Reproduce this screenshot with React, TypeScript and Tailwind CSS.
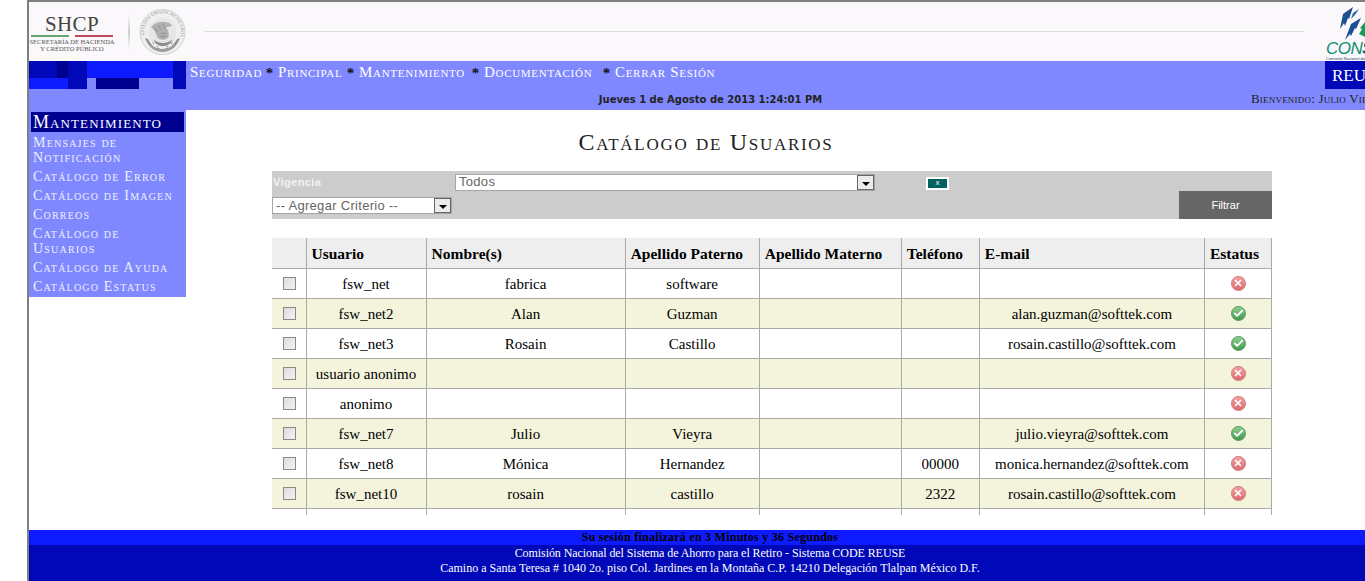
import { Check, X } from 'lucide-react';

const serif = "font-['Liberation_Serif',serif]";
const sans = "font-['Liberation_Sans',sans-serif]";
const deco = "font-['Liberation_Serif',serif] [font-variant:small-caps]";

const navItems = [
  { label: 'Seguridad', width: 'w-[71px]' },
  { label: 'Principal', width: 'w-[64px]' },
  { label: 'Mantenimiento', width: 'w-[108px]' },
  { label: 'Documentación', width: 'w-[114px]' },
  { label: 'Cerrar Sesión', width: 'w-[96px]' },
];

const sideItems = [
  'Mensajes de Notificación',
  'Catálogo de Error',
  'Catálogo de Imagen',
  'Correos',
  'Catálogo de Usuarios',
  'Catálogo de Ayuda',
  'Catálogo Estatus',
];

const columns = ['Usuario', 'Nombre(s)', 'Apellido Paterno', 'Apellido Materno', 'Teléfono', 'E-mail', 'Estatus'];

const users = [
  { user: 'fsw_net', name: 'fabrica', last: 'software', phone: '', email: '', active: false },
  { user: 'fsw_net2', name: 'Alan', last: 'Guzman', phone: '', email: 'alan.guzman@softtek.com', active: true },
  { user: 'fsw_net3', name: 'Rosain', last: 'Castillo', phone: '', email: 'rosain.castillo@softtek.com', active: true },
  { user: 'usuario anonimo', name: '', last: '', phone: '', email: '', active: false },
  { user: 'anonimo', name: '', last: '', phone: '', email: '', active: false },
  { user: 'fsw_net7', name: 'Julio', last: 'Vieyra', phone: '', email: 'julio.vieyra@softtek.com', active: true },
  { user: 'fsw_net8', name: 'Mónica', last: 'Hernandez', phone: '00000', email: 'monica.hernandez@softtek.com', active: false },
  { user: 'fsw_net10', name: 'rosain', last: 'castillo', phone: '2322', email: 'rosain.castillo@softtek.com', active: false },
];

function Seal() {
  return (
    <svg width="47" height="48" viewBox="0 0 47 48">
      <defs>
        <path id="sealArc" d="M6.500 31A18.500 18.500 0 1 1 40.500 31" />
      </defs>
      <circle cx="23.500" cy="24" r="23" fill="#f0eff0" />
      <circle cx="23.500" cy="24" r="22.500" fill="none" stroke="#c9c9c9" strokeWidth="0.8" />
      <text fontSize="4.200" fill="#8a8a8a" fontFamily="Liberation Serif, serif" letterSpacing="0.2">
        <textPath href="#sealArc" startOffset="4">ESTADOS UNIDOS MEXICANOS</textPath>
      </text>
      <path d="M6 30c3 9 10 14 17.500 14S38 39 41 30c-1 0-3 1-4 3-3 5-8 8-13.500 8S12 38 10 33c-1-2-3-3-4-3z" fill="#9c9c9c" />
      <path d="M8 31l4 6M12 30l3 7M35 30l-3 7M39 31l-4 6M18 38l2 3M29 38l-2 3" stroke="#6f6f6f" strokeWidth="1" strokeDasharray="1.500 1" fill="none" />
      <circle cx="23.500" cy="24" r="14" fill="#e6e6e6" />
      <path d="M12 19c5-6 15-7 21-2-2 2-4 2-6 2 2 3 4 7 2 11-4 3-9 2-11-1-1-4-3-8-6-10z" fill="#b0b0b0" />
      <path d="M15 32c3 2 6 3 9 3s6-1 9-3c-1 4-5 6-9 6s-8-2-9-6z" fill="#8c8c8c" />
      <path d="M19 17l3 5M24 16l2 5M16 20l3 4M22 26l5-1M21 29l6-1" stroke="#8f8f8f" strokeWidth="0.9" fill="none" />
    </svg>
  );
}

function ConsarSwoosh() {
  return (
    <svg width="39" height="37" viewBox="0 0 39 37" className="block">
      <path d="M27 3 L17 10 L14 25 L18 19 L19 22 L22 14 L23 15z" fill="#1c4f8f" />
      <path d="M35 14 L25 20 L19 36 L24 30 L25 32 L29 24 L30 25z" fill="#1c4f8f" />
      <path d="M33 5 L27 9 L25 15 L29 11z" fill="#2f6aa8" />
      <path d="M39 18 L34 24 L36 25 L33 30 L39 33z" fill="#1f9a5c" />
    </svg>
  );
}

function StatusIcon({ active }: { active: boolean }) {
  if (active) {
    return (
      <span className="ml-[26px] flex h-[15px] w-[15px] items-center justify-center rounded-full border border-[#5c9c62] bg-gradient-to-b from-[#8ccf90] to-[#3f9a4a]">
        <Check className="h-[11px] w-[11px] text-white" strokeWidth={4} />
      </span>
    );
  }
  return (
    <span className="ml-[26px] flex h-[15px] w-[15px] items-center justify-center rounded-full border border-[#d07a7e] bg-gradient-to-b from-[#f2a0a3] to-[#dd6a70]">
      <X className="h-[10px] w-[10px] text-white" strokeWidth={4} />
    </span>
  );
}

function FakeSelect({ label, width }: { label: string; width: string }) {
  return (
    <div className={`flex h-[17px] items-center justify-between border border-[#a5a5a5] bg-white ${width}`}>
      <span className={`-mt-[1px] pl-[3px] text-[13px] leading-none tracking-[0.3px] text-[#666] ${sans}`}>{label}</span>
      <span className="flex h-[15px] w-[17px] items-center justify-center border border-[#666] bg-[#ececec]">
        <span className="mt-[3px] h-0 w-0 border-x-[4px] border-t-[4px] border-x-transparent border-t-black" />
      </span>
    </div>
  );
}

export default function App() {
  return (
    <div className={`flex h-[581px] w-[1365px] overflow-hidden bg-white ${serif}`}>
      <div className="w-[27px] shrink-0 bg-white" />
      <div className="flex w-[1364px] shrink-0 flex-col border-l-2 border-t-2 border-[#7f7f7f]">
        {/* Header */}
        <header className="flex h-[59px] shrink-0 items-center bg-[#faf8fa]">
          <div className="flex w-[175px] shrink-0 items-center">
            <div className="ml-[2px] flex w-[82px] flex-col items-center">
              <span className="mt-[1px] text-[21px] leading-[22px] tracking-[0.4px] text-[#444]">SHCP</span>
              <div className="flex h-[2px] w-[82px] gap-[6px]">
                <span className="flex-1 bg-[#6aa56f]" />
                <span className="flex-1 bg-[#c0485e]" />
              </div>
              <span className="mt-[1px] whitespace-nowrap text-[6.500px] leading-[7px] text-[#555]">SECRETARÍA DE HACIENDA</span>
              <span className="whitespace-nowrap text-[6.500px] leading-[7px] text-[#555]">Y CRÉDITO PÚBLICO</span>
            </div>
            <div className="ml-[15px] h-[36px] w-[2px] bg-gradient-to-b from-[#faf8fa] via-[#cfcfcf] to-[#faf8fa]" />
            <div className="ml-[9px]">
              <Seal />
            </div>
          </div>
          <div className="h-px w-[1100px] bg-[#dcdcdc]" />
          <div className="ml-[22px] flex w-[60px] shrink-0 flex-col pt-[1px]">
            <ConsarSwoosh />
            <span className={`text-[17px] italic leading-[15px] tracking-[-0.5px] text-[#0e8f73] ${sans}`}>
              CON<span className="font-bold text-[#17456f]">SAR</span>
            </span>
            <span className={`whitespace-nowrap text-[4px] leading-[5px] text-[#27476d] ${sans}`}>Comisión Nacional del Sistema de Ahorro</span>
          </div>
        </header>

        {/* Nav */}
        <div className="flex h-[49px] shrink-0 flex-col bg-[#8088ff]">
          <div className="flex h-[28px]">
            <div className="grid h-[28px] w-[157px] shrink-0 grid-cols-[28px_11px_19px_9px_43px_34px_13px] grid-rows-[17px_11px]">
              <span className="bg-[#0008b8]" />
              <span className="bg-[#000090]" />
              <span className="row-span-2 bg-[#0008b8]" />
              <span className="col-span-3 bg-[#0f1bff]" />
              <span className="row-span-2 bg-[#0008b8]" />
              <span className="col-span-2 bg-[#0f1bff]" />
              <span className="bg-[#8088ff]" />
              <span className="bg-[#000090]" />
              <span className="bg-[#8088ff]" />
            </div>
            <nav className="ml-[4px] flex h-[22px] w-[1135px] items-center text-[15px] tracking-[0.7px] text-white [font-variant:small-caps]">
              {navItems.map((item, i) => (
                <span key={item.label} className="flex items-center whitespace-nowrap">
                  {i > 0 && <span className="mt-[3px] w-[17px] text-center text-[15px] font-bold leading-none tracking-normal text-[#111]">*</span>}
                  <span className={item.width}>{item.label}</span>
                </span>
              ))}
            </nav>
            <div className="flex h-[28px] w-[66px] shrink-0 items-center bg-[#0008b8] pl-[7px] text-[17px] leading-none text-white">
              REUSE
            </div>
          </div>
          <div className="relative h-[21px] text-center text-[10px] font-bold leading-[21px] text-[#222] [font-family:'DejaVu_Sans',sans-serif]">
            <span className="ml-[1px]">Jueves 1 de Agosto de 2013 1:24:01 PM</span>
            <span className={`absolute left-[1222px] top-0 whitespace-nowrap text-[13px] font-normal leading-[20px] tracking-[0.2px] ${deco}`}>
              Bienvenido: Julio Vieyra
            </span>
          </div>
        </div>

        {/* Body */}
        <div className="flex h-[420px] shrink-0">
          <aside className="h-[187px] w-[157px] shrink-0 bg-[#8088ff] pl-[2px] pt-[2px]">
            <div className="mb-[3px] flex h-[20px] w-[153px] items-center bg-[#000090] pl-[2px] text-[18px] leading-none tracking-[1.1px] text-white [font-variant:small-caps]">
              Mantenimiento
            </div>
            <ul className="text-[14px] leading-[15px] tracking-[1.2px] text-[#eef0ff] [font-variant:small-caps]">
              {sideItems.map((item) => (
                <li key={item} className="mb-[4px] pl-[2px] pr-[6px]">
                  {item}
                </li>
              ))}
            </ul>
          </aside>

          <main className="ml-[86px] w-[1000px] shrink-0">
            <h1 className="mr-[132px] mt-[20px] h-[41px] text-center text-[24px] leading-[24px] tracking-[1.7px] text-[#222] [font-variant:small-caps]">
              Catálogo de Usuarios
            </h1>

            {/* Filter */}
            <div className="flex h-[48px] w-[1000px] flex-col bg-[#cccccc]">
              <div className="flex h-[20px] items-center pt-[2px]">
                <span className={`w-[183px] pl-[1px] text-[11px] font-bold tracking-[0.4px] text-[#f2f2f2] ${sans}`}>Vigencia</span>
                <FakeSelect label="Todos" width="w-[420px]" />
                <div className="ml-[51px] mt-[2px] flex h-[13px] w-[23px] items-center justify-center border-2 border-white bg-[#00615f]">
                  <span className={`text-[8px] leading-none text-white ${sans}`}>x</span>
                </div>
              </div>
              <div className="flex h-[28px] items-end justify-between">
                <div className="mb-[5px]">
                  <FakeSelect label="-- Agregar Criterio --" width="w-[180px]" />
                </div>
                <div className={`flex h-[28px] w-[93px] items-center justify-center bg-[#666666] text-[11px] text-white ${sans}`}>
                  Filtrar
                </div>
              </div>
            </div>

            {/* Grid */}
            <div className="mt-[19px] h-[277px] w-[1000px] overflow-hidden">
              <table className="w-[1000px] table-fixed border-collapse text-[15px] text-black">
                <colgroup>
                  <col className="w-[34px]" />
                  <col className="w-[120px]" />
                  <col className="w-[199px]" />
                  <col className="w-[134px]" />
                  <col className="w-[142px]" />
                  <col className="w-[78px]" />
                  <col className="w-[225px]" />
                  <col className="w-[67px]" />
                </colgroup>
                <thead>
                  <tr className="h-[30px] bg-[#eeeeee]">
                    <th className="border-b border-r border-[#aaaaaa]" />
                    {columns.map((col) => (
                      <th key={col} className="whitespace-nowrap border-b border-r border-[#aaaaaa] pl-[5px] pt-[1px] text-left text-[15.5px] font-bold">
                        {col}
                      </th>
                    ))}
                  </tr>
                </thead>
                <tbody>
                  {users.map((row, i) => (
                    <tr key={row.user} className={`h-[30px] ${i % 2 === 1 ? 'bg-[#f4f4dc]' : 'bg-white'}`}>
                      <td className="border-b border-r border-[#aaaaaa]">
                        <span className="ml-[11px] block h-[13px] w-[13px] border border-[#8a8a8a] bg-gradient-to-br from-[#dcdcdc] to-[#f4f4f4]" />
                      </td>
                      <td className="whitespace-nowrap border-b border-r border-[#aaaaaa] pt-[2px] text-center">{row.user}</td>
                      <td className="border-b border-r border-[#aaaaaa] pt-[2px] text-center">{row.name}</td>
                      <td className="border-b border-r border-[#aaaaaa] pt-[2px] text-center">{row.last}</td>
                      <td className="border-b border-r border-[#aaaaaa]" />
                      <td className="border-b border-r border-[#aaaaaa] pt-[2px] text-center">{row.phone}</td>
                      <td className="whitespace-nowrap border-b border-r border-[#aaaaaa] pt-[2px] text-center">{row.email}</td>
                      <td className="border-b border-r border-[#aaaaaa]">
                        <StatusIcon active={row.active} />
                      </td>
                    </tr>
                  ))}
                  <tr className="h-[30px]">
                    <td className="border-r border-[#aaaaaa]" />
                    <td className="border-r border-[#aaaaaa]" />
                    <td className="border-r border-[#aaaaaa]" />
                    <td className="border-r border-[#aaaaaa]" />
                    <td className="border-r border-[#aaaaaa]" />
                    <td className="border-r border-[#aaaaaa]" />
                    <td className="border-r border-[#aaaaaa]" />
                    <td className="border-r border-[#aaaaaa]" />
                  </tr>
                </tbody>
              </table>
            </div>
          </main>
        </div>

        {/* Footer */}
        <footer className="flex h-[51px] shrink-0 flex-col text-center text-[12px] leading-[15px]">
          <div className="h-[15px] bg-[#0f1bff] font-bold tracking-[0.25px] text-black">Su sesión finalizará en 3 Minutos y 36 Segundos</div>
          <div className="h-[36px] bg-[#0008b8] text-white">
            <div className="pt-[1px] tracking-[-0.07px]">Comisión Nacional del Sistema de Ahorro para el Retiro - Sistema CODE REUSE</div>
            <div>Camino a Santa Teresa # 1040 2o. piso Col. Jardines en la Montaña C.P. 14210 Delegación Tlalpan México D.F.</div>
          </div>
        </footer>
      </div>
    </div>
  );
}
